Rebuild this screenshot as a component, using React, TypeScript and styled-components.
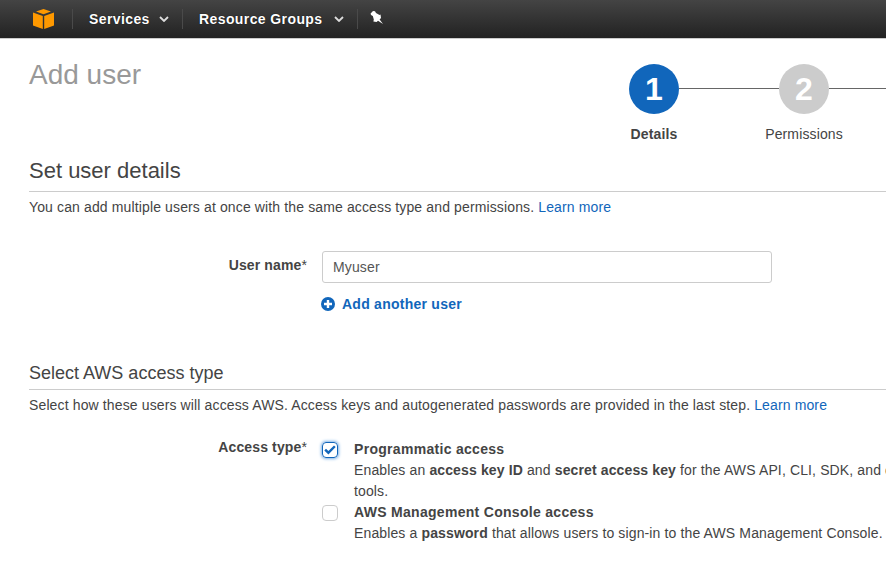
import styled, { createGlobalStyle } from "styled-components";

const GlobalStyle = createGlobalStyle`
	html, body {
		margin: 0;
		padding: 0;
		height: 100%;
		background: #fff;
		overflow: hidden;
	}
	body {
		font-family: "Liberation Sans", Arial, sans-serif;
		font-size: 14px;
		color: #444;
		letter-spacing: 0.13px;
	}
`;

const Page = styled.div`
	width: 886px;
	height: 564px;
	overflow: hidden;
	display: flex;
	flex-direction: column;
`;

const NavBar = styled.div`
	flex: 0 0 38px;
	display: flex;
	align-items: center;
	background: linear-gradient(#444, #222);
	border-bottom: 1px solid #ccc;
	padding-left: 33px;
`;

const NavDivider = styled.div`
	width: 1px;
	height: 20px;
	background: #4a4a4a;
`;

const NavLogo = styled.svg`
	width: 21px;
	height: 20px;
	margin-right: 18px;
`;

const NavItem = styled.div<{ $width: number }>`
	width: ${(p) => p.$width}px;
	box-sizing: border-box;
	padding: 0 13px 0 16px;
	display: flex;
	align-items: center;
	justify-content: space-between;
	color: #fff;
	font-weight: bold;
	font-size: 14px;
	letter-spacing: 0.4px;
	text-shadow: 0 0 1px #000;
`;

const PinButton = styled.div`
	padding-left: 12px;
	display: flex;
	align-items: center;
	margin-top: -3px;
`;

const Content = styled.div`
	flex: 1;
	padding-left: 29px;
	display: flex;
	flex-direction: column;
`;

const HeaderRow = styled.div`
	display: flex;
	height: 111px;
	justify-content: space-between;
`;

const Title = styled.h1`
	margin: 20px 0 0;
	font-size: 28px;
	line-height: 32px;
	font-weight: normal;
	letter-spacing: 0;
	color: #999;
`;

const Stepper = styled.div`
	display: flex;
	width: 257px;
	padding-top: 25px;
	flex: none;
`;

const Step = styled.div`
	flex: 0 0 150px;
	display: flex;
	flex-direction: column;
`;

const StepTrack = styled.div`
	display: flex;
	align-items: center;
	height: 50px;
`;

const StepCircle = styled.div<{ $active?: boolean }>`
	flex: 0 0 50px;
	height: 50px;
	border-radius: 50%;
	display: flex;
	align-items: center;
	justify-content: center;
	background: ${(p) => (p.$active ? "#1166bb" : "#cccccc")};
	color: #fff;
	font-size: 32px;
	font-weight: bold;
`;

const StepLine = styled.div`
	flex: 1;
	height: 1px;
	background: #666;
	margin-top: -2px;
`;

const StepLabel = styled.div<{ $active?: boolean }>`
	width: 50px;
	margin-top: 12px;
	display: flex;
	justify-content: center;
	white-space: nowrap;
	line-height: 16px;
	font-weight: ${(p) => (p.$active ? "bold" : "normal")};
`;

const SectionHeading = styled.h2<{ $size: number; $top: number; $gap: number }>`
	margin: ${(p) => p.$top}px 0 0;
	font-size: ${(p) => p.$size}px;
	line-height: 26px;
	font-weight: normal;
	letter-spacing: 0;
	padding-bottom: ${(p) => p.$gap}px;
	border-bottom: 1px solid #ccc;
	color: #444;
`;

const SectionNote = styled.p`
	margin: 7px 0 0;
	line-height: 16px;
	white-space: nowrap;
`;

const Link = styled.a`
	color: #1166bb;
`;

const FormRow = styled.div<{ $top: number }>`
	display: flex;
	margin-top: ${(p) => p.$top}px;
`;

const FieldLabel = styled.label<{ $offset: number }>`
	flex: 0 0 278px;
	text-align: right;
	font-weight: bold;
	line-height: 16px;
	padding-top: ${(p) => p.$offset}px;
	white-space: nowrap;

	span {
		font-weight: normal;
	}
`;

const FieldBody = styled.div`
	margin-left: 15px;
	display: flex;
	flex-direction: column;
`;

const TextInput = styled.div`
	width: 450px;
	height: 32px;
	box-sizing: border-box;
	border: 1px solid #ccc;
	border-radius: 3px;
	padding: 0 10px;
	display: flex;
	align-items: center;
	color: #555;
`;

const AddAnother = styled.div`
	margin: 13px 0 0 -1px;
	display: flex;
	align-items: center;
	gap: 7px;
	color: #1166bb;
	font-weight: bold;
	letter-spacing: 0.25px;
	line-height: 16px;
`;

const OptionRow = styled.div`
	display: flex;
	width: 560px;
	gap: 16px;
`;

const CheckBox = styled.div<{ $checked?: boolean }>`
	flex: 0 0 16px;
	height: 16px;
	margin-top: 3px;
	border-radius: 4px;
	box-sizing: border-box;
	display: flex;
	align-items: center;
	justify-content: center;
	border: 1px solid ${(p) => (p.$checked ? "#1166bb" : "#ccc")};
	box-shadow: ${(p) => (p.$checked ? "0 0 3px 1px #7fb2e5" : "none")};
`;

const OptionText = styled.div`
	flex: 1;
	line-height: 21px;
	white-space: nowrap;

	strong {
		font-weight: bold;
	}
`;

const OptionTitle = styled.div`
	font-weight: bold;
	letter-spacing: 0.3px;
`;

function AwsCube() {
	return <NavLogo viewBox="0 0 21 20">
		<polygon points="10.5,0 18,2.6 10.5,5.2 3,2.6" fill="#f90" />
		<polygon points="0,3.4 9.8,7 9.8,20 0,16.4" fill="#f90" />
		<polygon points="21,3.4 11.2,7 11.2,20 21,16.4" fill="#f90" />
	</NavLogo>;
}

function Chevron() {
	return <svg width="10" height="6" viewBox="0 0 10 6">
		<path d="M1 1 L5 5 L9 1" fill="none" stroke="#ddd" strokeWidth="1.8" />
	</svg>;
}

function Pin() {
	return <svg width="13" height="13" viewBox="0 0 13 13">
		<path d="M3 0 L5 0.2 L6 2 L9.5 4 L10.5 3.6 L11 7 L9.6 8.4 L13 13 L8 9.8 L6.6 11 L3.4 10.4 L3.8 8.6 L2.8 5 L1 4 L0.6 2.6 Z" fill="#fff" />
	</svg>;
}

function PlusCircle() {
	return <svg width="14" height="14" viewBox="0 0 14 14">
		<circle cx="7" cy="7" r="7" fill="#1166bb" />
		<path d="M7 3 V11 M3 7 H11" stroke="#fff" strokeWidth="2.4" />
	</svg>;
}

function Check() {
	return <svg width="12" height="10" viewBox="0 0 12 10">
		<path d="M0.3 5.4 L2 3.7 L4.4 6.1 L10 0.4 L11.7 2.1 L4.4 9.6 Z" fill="#1166bb" />
	</svg>;
}

export default function App() {
	return <Page>
		<GlobalStyle />
		<NavBar>
			<AwsCube />
			<NavDivider />
			<NavItem $width={109}>Services <Chevron /></NavItem>
			<NavDivider />
			<NavItem $width={174}>Resource Groups <Chevron /></NavItem>
			<NavDivider />
			<PinButton><Pin /></PinButton>
		</NavBar>
		<Content>
			<HeaderRow>
				<Title>Add user</Title>
				<Stepper>
					<Step>
						<StepTrack>
							<StepCircle $active>1</StepCircle>
							<StepLine />
						</StepTrack>
						<StepLabel $active>Details</StepLabel>
					</Step>
					<Step>
						<StepTrack>
							<StepCircle>2</StepCircle>
							<StepLine />
						</StepTrack>
						<StepLabel>Permissions</StepLabel>
					</Step>
				</Stepper>
			</HeaderRow>
			<SectionHeading $size={22} $top={8} $gap={7}>Set user details</SectionHeading>
			<SectionNote>You can add multiple users at once with the same access type and permissions. <Link>Learn more</Link></SectionNote>
			<FormRow $top={36}>
				<FieldLabel $offset={6}>User name<span>*</span></FieldLabel>
				<FieldBody>
					<TextInput>Myuser</TextInput>
					<AddAnother><PlusCircle /> Add another user</AddAnother>
				</FieldBody>
			</FormRow>
			<SectionHeading $size={18} $top={48} $gap={3}>Select AWS access type</SectionHeading>
			<SectionNote>Select how these users will access AWS. Access keys and autogenerated passwords are provided in the last step. <Link>Learn more</Link></SectionNote>
			<FormRow $top={26}>
				<FieldLabel $offset={0}>Access type<span>*</span></FieldLabel>
				<FieldBody>
					<OptionRow>
						<CheckBox $checked><Check /></CheckBox>
						<OptionText>
							<OptionTitle>Programmatic access</OptionTitle>
							Enables an <strong>access key ID</strong> and <strong>secret access key</strong> for the AWS API, CLI, SDK, and other development<br />tools.
						</OptionText>
					</OptionRow>
					<OptionRow>
						<CheckBox />
						<OptionText>
							<OptionTitle>AWS Management Console access</OptionTitle>
							Enables a <strong>password</strong> that allows users to sign-in to the AWS Management Console.
						</OptionText>
					</OptionRow>
				</FieldBody>
			</FormRow>
		</Content>
	</Page>;
}
